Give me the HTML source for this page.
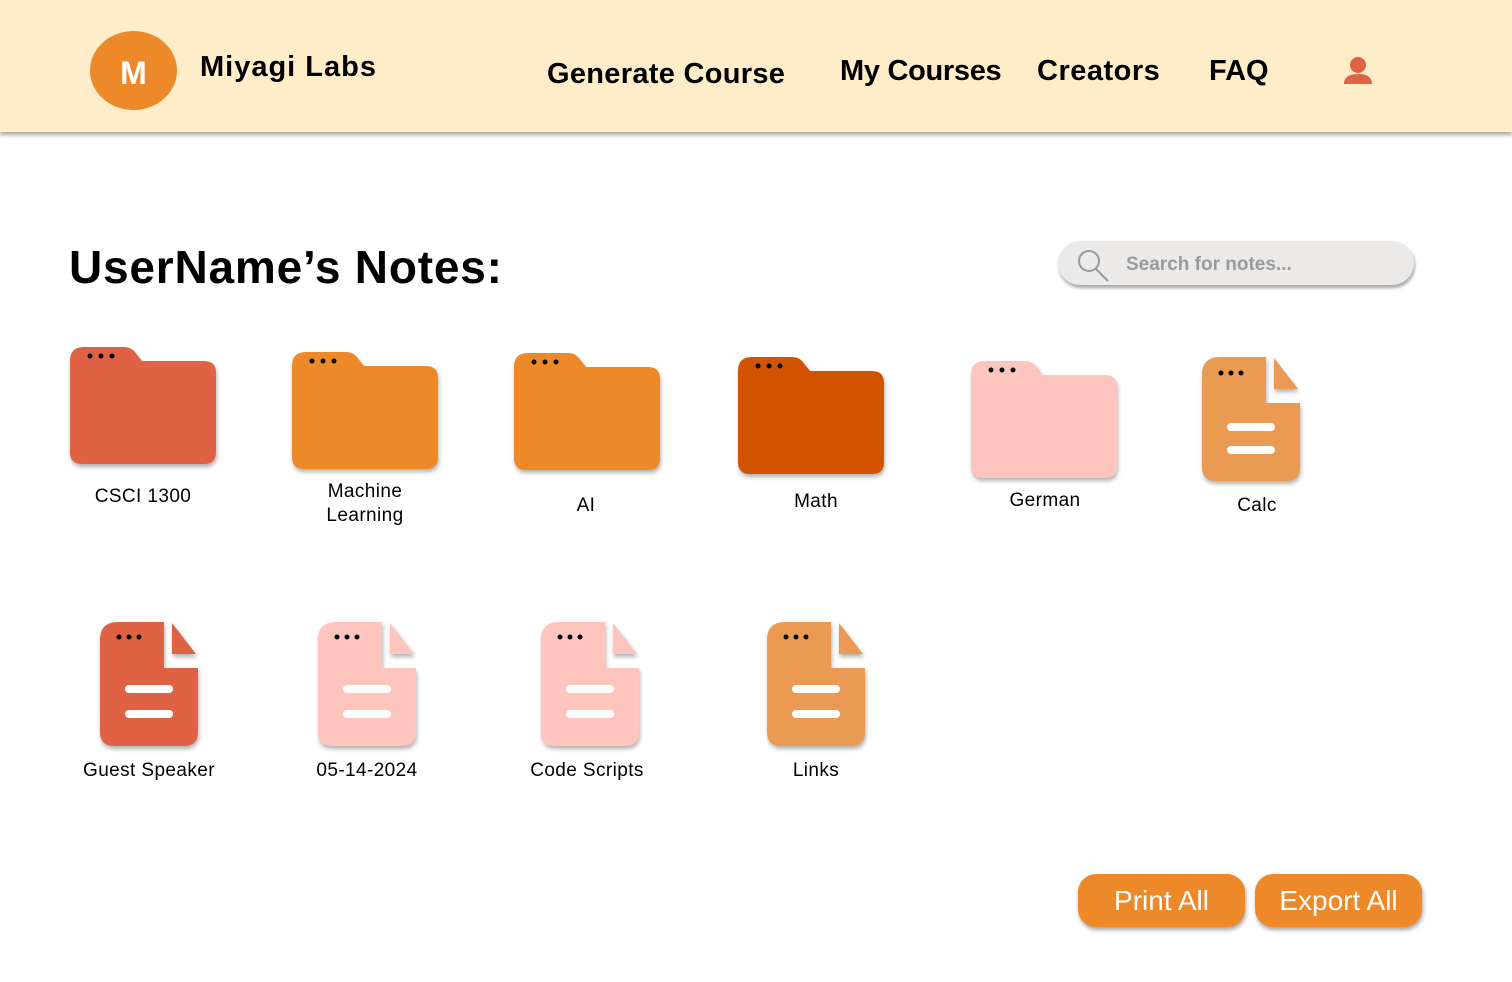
<!DOCTYPE html>
<html><head><meta charset="utf-8"><style>
*{margin:0;padding:0;box-sizing:border-box}
body{width:1512px;height:982px;background:#fff;font-family:"Liberation Sans",sans-serif;position:relative;overflow:hidden;color:#000}
.hdr{position:absolute;left:0;top:0;width:1512px;height:132px;background:#FEEDC8;box-shadow:0 3px 4px rgba(0,0,0,.35)}
.a{position:absolute;white-space:nowrap}
.nav{font-weight:bold;font-size:29px;top:55px}
.lbl{position:absolute;font-size:19px;text-align:center;width:200px;line-height:24px;letter-spacing:.4px}
svg{position:absolute;overflow:visible}
.btn{position:absolute;top:874px;height:53px;background:#EE892A;border-radius:18px;color:#fff;font-size:28px;text-align:center;line-height:53px;box-shadow:1px 3px 4px rgba(0,0,0,.35)}
</style></head><body>
<div class="hdr"></div>
<div class="a" style="left:90px;top:31px;width:87px;height:79px;border-radius:50%;background:#EE892A;color:#fff;font-weight:bold;font-size:32px;text-align:center;line-height:84px">M</div>
<div class="a" style="left:200px;top:51px;font-size:29px;font-weight:bold;letter-spacing:1px">Miyagi Labs</div>
<div class="a nav" style="left:547px;top:58px;letter-spacing:.3px">Generate Course</div>
<div class="a nav" style="left:840px;letter-spacing:-.3px">My Courses</div>
<div class="a nav" style="left:1037px;letter-spacing:.5px">Creators</div>
<div class="a nav" style="left:1209px">FAQ</div>
<svg style="left:1343px;top:54px" width="32" height="32"><circle cx="15" cy="11" r="8" fill="#E06245"/><path d="M1,30 Q1,20 15,20 Q29,20 29,30 Z" fill="#E06245"/></svg>
<div class="a" style="left:69px;top:240px;font-size:46px;font-weight:bold;letter-spacing:.8px">UserName’s Notes:</div>
<div class="a" style="left:1058px;top:241px;width:356px;height:44px;border-radius:22px;background:#EBEAE9;box-shadow:1px 3px 3px rgba(0,0,0,.35)"></div>
<svg style="left:1076px;top:248px" width="36" height="34"><circle cx="13" cy="13" r="10" fill="none" stroke="#999" stroke-width="2"/><path d="M20,21 L32,33" stroke="#999" stroke-width="2"/></svg>
<div class="a" style="left:1126px;top:254px;font-size:19px;color:#9a9a9a;font-weight:bold">Search for notes...</div>

<svg style="left:70px;top:347px" width="146" height="117"><path d="M0,14 Q0,0 14,0 H54 Q60,0 64,4 L72,14 H134 Q146,14 146,26 V105 Q146,117 134,117 H12 Q0,117 0,105 Z" fill="#E06245" style="filter:drop-shadow(1px 3px 2px rgba(0,0,0,.3))"/><circle cx="20" cy="9" r="2.5"/><circle cx="31" cy="9" r="2.5"/><circle cx="42" cy="9" r="2.5"/></svg>
<svg style="left:292px;top:352px" width="146" height="117"><path d="M0,14 Q0,0 14,0 H54 Q60,0 64,4 L72,14 H134 Q146,14 146,26 V105 Q146,117 134,117 H12 Q0,117 0,105 Z" fill="#EE892A" style="filter:drop-shadow(1px 3px 2px rgba(0,0,0,.3))"/><circle cx="20" cy="9" r="2.5"/><circle cx="31" cy="9" r="2.5"/><circle cx="42" cy="9" r="2.5"/></svg>
<svg style="left:514px;top:353px" width="146" height="117"><path d="M0,14 Q0,0 14,0 H54 Q60,0 64,4 L72,14 H134 Q146,14 146,26 V105 Q146,117 134,117 H12 Q0,117 0,105 Z" fill="#EE892A" style="filter:drop-shadow(1px 3px 2px rgba(0,0,0,.3))"/><circle cx="20" cy="9" r="2.5"/><circle cx="31" cy="9" r="2.5"/><circle cx="42" cy="9" r="2.5"/></svg>
<svg style="left:738px;top:357px" width="146" height="117"><path d="M0,14 Q0,0 14,0 H54 Q60,0 64,4 L72,14 H134 Q146,14 146,26 V105 Q146,117 134,117 H12 Q0,117 0,105 Z" fill="#D35400" style="filter:drop-shadow(1px 3px 2px rgba(0,0,0,.3))"/><circle cx="20" cy="9" r="2.5"/><circle cx="31" cy="9" r="2.5"/><circle cx="42" cy="9" r="2.5"/></svg>
<svg style="left:971px;top:361px" width="146" height="117"><path d="M0,14 Q0,0 14,0 H54 Q60,0 64,4 L72,14 H134 Q146,14 146,26 V105 Q146,117 134,117 H12 Q0,117 0,105 Z" fill="#FEC5BF" style="filter:drop-shadow(1px 3px 2px rgba(0,0,0,.3))"/><circle cx="20" cy="9" r="2.5"/><circle cx="31" cy="9" r="2.5"/><circle cx="42" cy="9" r="2.5"/></svg>

<svg style="left:1202px;top:357px" width="98" height="124"><g style="filter:drop-shadow(1px 3px 2px rgba(0,0,0,.3))"><path d="M18,0 H64 V46 H98 V110 Q98,124 84,124 H14 Q0,124 0,110 V18 Q0,0 18,0 Z" fill="#EA9A52"/><path d="M72,1 L96,32 H72 Z" fill="#EA9A52"/></g><circle cx="19" cy="16" r="2.5"/><circle cx="29" cy="16" r="2.5"/><circle cx="39" cy="16" r="2.5"/><rect x="25" y="66" width="48" height="8" rx="4" fill="#fff"/><rect x="25" y="89" width="48" height="8" rx="4" fill="#fff"/></svg>
<svg style="left:100px;top:622px" width="98" height="124"><g style="filter:drop-shadow(1px 3px 2px rgba(0,0,0,.3))"><path d="M18,0 H64 V46 H98 V110 Q98,124 84,124 H14 Q0,124 0,110 V18 Q0,0 18,0 Z" fill="#E06245"/><path d="M72,1 L96,32 H72 Z" fill="#E06245"/></g><circle cx="19" cy="15" r="2.5"/><circle cx="29" cy="15" r="2.5"/><circle cx="39" cy="15" r="2.5"/><rect x="25" y="63" width="48" height="8" rx="4" fill="#fff"/><rect x="25" y="88" width="48" height="8" rx="4" fill="#fff"/></svg>
<svg style="left:318px;top:622px" width="98" height="124"><g style="filter:drop-shadow(1px 3px 2px rgba(0,0,0,.3))"><path d="M18,0 H64 V46 H98 V110 Q98,124 84,124 H14 Q0,124 0,110 V18 Q0,0 18,0 Z" fill="#FEC5BF"/><path d="M72,1 L96,32 H72 Z" fill="#FEC5BF"/></g><circle cx="19" cy="15" r="2.5"/><circle cx="29" cy="15" r="2.5"/><circle cx="39" cy="15" r="2.5"/><rect x="25" y="63" width="48" height="8" rx="4" fill="#fff"/><rect x="25" y="88" width="48" height="8" rx="4" fill="#fff"/></svg>
<svg style="left:541px;top:622px" width="98" height="124"><g style="filter:drop-shadow(1px 3px 2px rgba(0,0,0,.3))"><path d="M18,0 H64 V46 H98 V110 Q98,124 84,124 H14 Q0,124 0,110 V18 Q0,0 18,0 Z" fill="#FEC5BF"/><path d="M72,1 L96,32 H72 Z" fill="#FEC5BF"/></g><circle cx="19" cy="15" r="2.5"/><circle cx="29" cy="15" r="2.5"/><circle cx="39" cy="15" r="2.5"/><rect x="25" y="63" width="48" height="8" rx="4" fill="#fff"/><rect x="25" y="88" width="48" height="8" rx="4" fill="#fff"/></svg>
<svg style="left:767px;top:622px" width="98" height="124"><g style="filter:drop-shadow(1px 3px 2px rgba(0,0,0,.3))"><path d="M18,0 H64 V46 H98 V110 Q98,124 84,124 H14 Q0,124 0,110 V18 Q0,0 18,0 Z" fill="#EA9A52"/><path d="M72,1 L96,32 H72 Z" fill="#EA9A52"/></g><circle cx="19" cy="15" r="2.5"/><circle cx="29" cy="15" r="2.5"/><circle cx="39" cy="15" r="2.5"/><rect x="25" y="63" width="48" height="8" rx="4" fill="#fff"/><rect x="25" y="88" width="48" height="8" rx="4" fill="#fff"/></svg>

<div class="lbl" style="left:43px;top:485px">CSCI 1300</div>
<div class="lbl" style="left:265px;top:480px">Machine<br>Learning</div>
<div class="lbl" style="left:486px;top:494px">AI</div>
<div class="lbl" style="left:716px;top:490px">Math</div>
<div class="lbl" style="left:945px;top:489px">German</div>
<div class="lbl" style="left:1157px;top:494px">Calc</div>
<div class="lbl" style="left:49px;top:759px">Guest Speaker</div>
<div class="lbl" style="left:267px;top:759px">05-14-2024</div>
<div class="lbl" style="left:487px;top:759px">Code Scripts</div>
<div class="lbl" style="left:716px;top:759px">Links</div>

<div class="btn" style="left:1078px;width:167px">Print All</div>
<div class="btn" style="left:1255px;width:167px">Export All</div>
</body></html>
